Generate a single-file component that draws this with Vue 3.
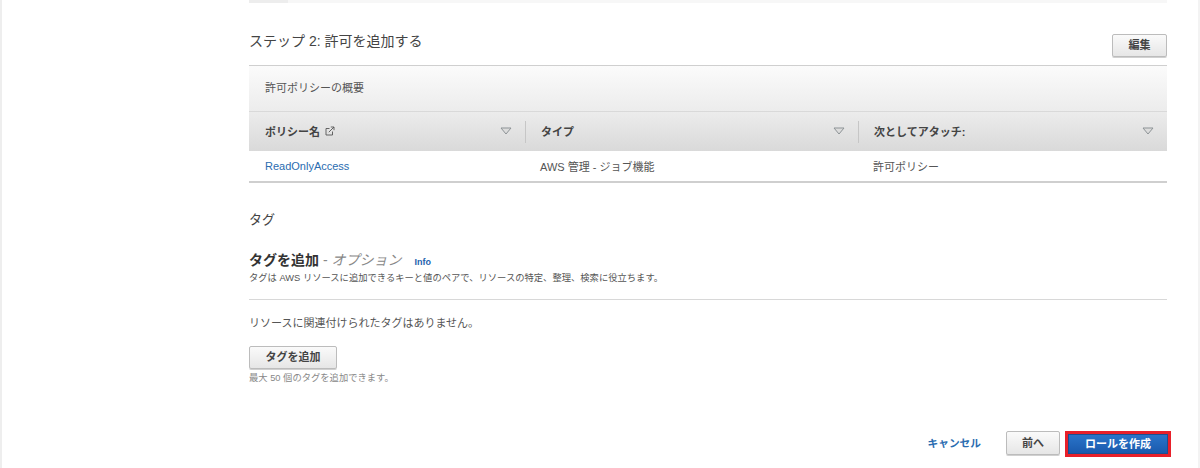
<script setup>
const columns = [
  { name: 'ポリシー名', external: true, value: 'ReadOnlyAccess', link: true },
  { name: 'タイプ', value: 'AWS 管理 - ジョブ機能' },
  { name: '次としてアタッチ:', value: '許可ポリシー' }
]
</script>

<template>
  <div class="page">
    <main class="content">
      <div class="tabstrip"><span class="tabstrip-dark"></span></div>

      <section class="step">
        <div class="step-head">
          <h2 class="step-title">ステップ 2: 許可を追加する</h2>
          <button class="btn btn-edit">編集</button>
        </div>
        <div class="summary">許可ポリシーの概要</div>
        <div class="table-row table-head">
          <div v-for="c in columns" :key="c.name" class="cell head-cell">
            <span class="head-label">{{ c.name }}</span>
            <svg v-if="c.external" class="ext" viewBox="0 0 10 10" width="10" height="10" fill="none" stroke="#555" stroke-width="0.9">
              <path d="M7.5 5.5V9H1V2.5h3.5" />
              <path d="M3.8 6.2 9 1M5.8 1H9v3.2" />
            </svg>
            <svg class="sort" viewBox="0 0 12 8" width="12" height="8">
              <path d="M1 1h10L6 7z" fill="#dcdcdc" stroke="#8d9396" stroke-width="1" />
            </svg>
          </div>
        </div>
        <div class="table-row table-body">
          <div v-for="c in columns" :key="c.name" class="cell body-cell" :class="{ link: c.link }">{{ c.value }}</div>
        </div>
      </section>

      <section class="tags">
        <h3 class="tags-title">タグ</h3>
        <div class="tags-sub">
          <strong>タグを追加</strong><span class="opt"> - <em>オプション</em></span><a class="info">Info</a>
        </div>
        <p class="tags-desc">タグは AWS リソースに追加できるキーと値のペアで、リソースの特定、整理、検索に役立ちます。</p>
        <hr class="rule" />
        <p class="empty">リソースに関連付けられたタグはありません。</p>
        <button class="btn btn-add">タグを追加</button>
        <p class="limit">最大 50 個のタグを追加できます。</p>
      </section>

      <footer class="actions">
        <a class="cancel">キャンセル</a>
        <button class="btn btn-prev">前へ</button>
        <span class="highlight"><button class="btn-primary">ロールを作成</button></span>
      </footer>
    </main>
  </div>
</template>

<style>
html, body { margin: 0; background: #fff; overflow: hidden; }
</style>

<style scoped>
.page {
  box-sizing: border-box;
  width: 1200px;
  height: 468px;
  padding: 0 31px 0 247px;
  background: #fff;
  border-left: 2px solid #eeeeee;
  border-right: 2px solid #f3f3f3;
  font-family: "Liberation Sans", "Noto Sans CJK JP", sans-serif;
  color: #444;
  overflow: hidden;
}
.content { width: 918px; }
.tabstrip { display: flex; height: 3px; background: #f7f7f7; }
.tabstrip-dark { width: 39px; background: #ededed; }
.step-head {
  display: flex;
  justify-content: space-between;
  align-items: flex-start;
  height: 63px;
  box-sizing: border-box;
  padding-top: 30px;
  border-bottom: 1px solid #cfcfcf;
}
.step-title { margin: 0; font-size: 14px; line-height: 16px; font-weight: 400; color: #444; }
.btn {
  box-sizing: border-box;
  border: 1px solid #bcbcbc;
  border-radius: 2px;
  background: linear-gradient(#fafafa, #e6e6e6);
  color: #444;
  font: 700 11px/1 "Liberation Sans", "Noto Sans CJK JP", sans-serif;
  padding: 0;
  box-shadow: 0 1px 0 #d0d0d0;
}
.btn-edit { width: 55px; height: 23px; margin-top: 1px; }
.summary {
  height: 46px;
  box-sizing: border-box;
  padding: 16px 0 0 16px;
  font-size: 11px;
  line-height: 13px;
  color: #555;
  background: linear-gradient(#fbfbfb, #ececec);
  border-bottom: 1px solid #d9d9d9;
}
.table-row { display: grid; grid-template-columns: 276px 333px 309px; }
.table-head { height: 39px; background: linear-gradient(#ececec, #d9d9d9); align-items: center; }
.cell { box-sizing: border-box; padding-left: 15px; }
.head-cell {
  display: flex;
  align-items: center;
  height: 22px;
  font-size: 11px;
  font-weight: 700;
  color: #444;
  padding-right: 13px;
  border-left: 1px solid #c6c6c6;
}
.head-cell:first-child { border-left: 0; padding-left: 16px; }
.head-label { margin-top: -2px; }
.ext { margin-left: 5px; margin-top: -2px; }
.sort { margin-left: auto; margin-top: -2px; }
.table-body { height: 30px; align-items: center; border-bottom: 2px solid #cfcfcf; box-sizing: content-box; }
.body-cell { font-size: 11px; color: #555; }
.link { color: #2a6cb0; padding-left: 16px; }
.tags-title { margin: 29px 0 0; font-size: 13px; line-height: 16px; font-weight: 400; color: #444; }
.tags-sub { margin-top: 24px; font-size: 14px; line-height: 16px; color: #333; display: flex; align-items: baseline; }
.tags-sub strong { font-weight: 700; }
.opt { color: #888; white-space: pre; }
.opt em { font-style: italic; }
.info { font-size: 9px; font-weight: 700; color: #1f62ae; margin-left: 13px; }
.tags-desc { margin: 2px 0 0; font-size: 9.3px; line-height: 12px; color: #555; }
.rule { margin: 15px 0 0; border: 0; border-top: 1px solid #d8d8d8; }
.empty { margin: 16px 0 0; font-size: 11px; line-height: 14px; color: #555; }
.btn-add { display: block; width: 88px; height: 23px; margin-top: 16px; }
.limit { margin: 3px 0 0; font-size: 9.3px; line-height: 12px; color: #888; }
.actions { display: flex; align-items: flex-start; justify-content: flex-end; margin-top: 47px; }
.cancel { font-size: 10.7px; line-height: 24px; font-weight: 700; color: #2a6cb0; margin-right: 25px; }
.btn-prev { width: 54px; height: 24px; margin-right: 5px; }
.highlight { display: block; background: #fff; border: 3px solid #e8202a; line-height: 0; margin-right: -4px; }
.btn-primary {
  box-sizing: border-box;
  width: 100px;
  height: 20px;
  padding: 0;
  border: 1px solid #1d4f91;
  background: linear-gradient(#2a74c9, #1a5aad);
  color: #fff;
  font: 700 11px/1 "Liberation Sans", "Noto Sans CJK JP", sans-serif;
}
</style>
